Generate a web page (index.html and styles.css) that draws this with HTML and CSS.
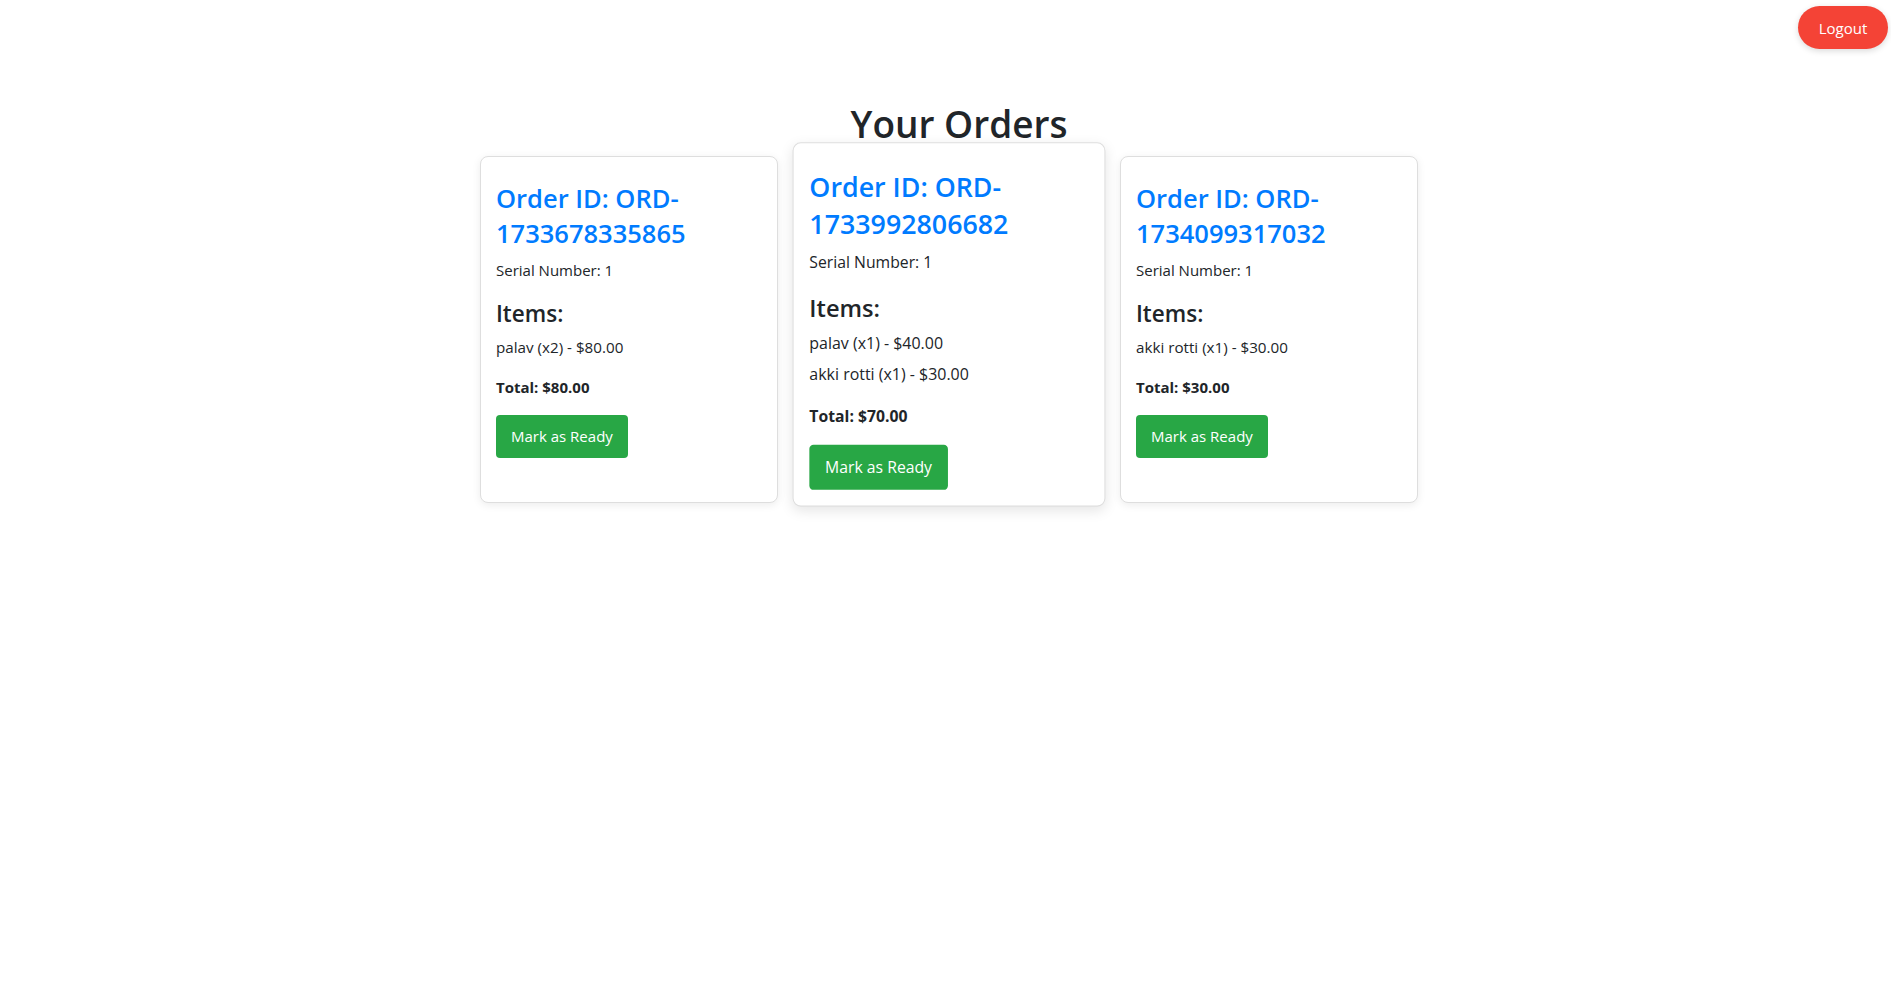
FILE: index.html
```html
<!DOCTYPE html>
<html lang="en">
<head>
<meta charset="utf-8">
<title>Your Orders</title>
<link rel="stylesheet" href="styles.css">
</head>
<body>
<button class="logout">Logout</button>
<main class="page">
  <h1 class="page-title">Your Orders</h1>
  <div class="orders">
    <div class="card">
      <h3 class="order-id">Order ID: ORD-1733678335865</h3>
      <p class="serial">Serial Number: 1</p>
      <h4 class="items-title">Items:</h4>
      <ul class="items">
        <li class="item">palav (x2) - $80.00</li>
      </ul>
      <p class="total">Total: $80.00</p>
      <button class="ready">Mark as Ready</button>
    </div>
    <div class="card card-active">
      <h3 class="order-id">Order ID: ORD-1733992806682</h3>
      <p class="serial">Serial Number: 1</p>
      <h4 class="items-title">Items:</h4>
      <ul class="items">
        <li class="item">palav (x1) - $40.00</li>
        <li class="item">akki rotti (x1) - $30.00</li>
      </ul>
      <p class="total">Total: $70.00</p>
      <button class="ready">Mark as Ready</button>
    </div>
    <div class="card">
      <h3 class="order-id">Order ID: ORD-1734099317032</h3>
      <p class="serial">Serial Number: 1</p>
      <h4 class="items-title">Items:</h4>
      <ul class="items">
        <li class="item">akki rotti (x1) - $30.00</li>
      </ul>
      <p class="total">Total: $30.00</p>
      <button class="ready">Mark as Ready</button>
    </div>
  </div>
</main>
</body>
</html>
```

FILE: styles.css
```css
* { box-sizing: border-box; }

body {
  margin: 0;
  font-family: "Open Sans", "Noto Sans", sans-serif;
  color: #212529;
  background: #fff;
}

.logout {
  position: absolute;
  top: 6px;
  right: 3px;
  width: 90px;
  height: 43px;
  border: none;
  border-radius: 22px;
  background: #f44336;
  color: #fff;
  font-family: inherit;
  font-size: 15px;
  box-shadow: 0 2px 6px rgba(0, 0, 0, 0.15);
  cursor: pointer;
}

.page-title {
  margin: 101px 0 10px;
  padding-left: 27px;
  text-align: center;
  font-size: 37px;
  line-height: 45px;
  font-weight: 600;
  color: #212529;
}

.orders {
  display: flex;
  justify-content: center;
  align-items: stretch;
  gap: 22px;
  padding-left: 7px;
  padding-bottom: 20px;
}

.card {
  width: 298px;
  padding: 15px;
  border: 1px solid #dedede;
  border-radius: 8px;
  background: #fff;
  box-shadow: 0 2px 8px rgba(0, 0, 0, 0.08);
}

.card-active {
  transform: translateY(-5px) scale(1.05);
  box-shadow: 0 4px 12px rgba(0, 0, 0, 0.1);
}

.order-id {
  margin: 9px 0 0;
  font-size: 25.5px;
  line-height: 35px;
  font-weight: 600;
  color: #007bff;
}

.serial {
  margin: 7.8px 0 0;
  font-size: 15px;
  line-height: 22.5px;
}

.items-title {
  margin: 18.4px 0 0;
  font-size: 22.5px;
  line-height: 27.6px;
  font-weight: 600;
}

.items {
  list-style: none;
  margin: 9px 0 0;
  padding: 0;
}

.item {
  font-size: 15.2px;
  line-height: 22.5px;
}

.item + .item {
  margin-top: 6.2px;
}

.total {
  margin: 17.5px 0 0;
  font-size: 15px;
  line-height: 22.5px;
  font-weight: 700;
}

.ready {
  margin-top: 16.6px;
  padding: 10px 15px;
  border: none;
  border-radius: 4px;
  background: #28a745;
  color: #fff;
  font-family: inherit;
  font-size: 15px;
  line-height: 23px;
  cursor: pointer;
}
```
